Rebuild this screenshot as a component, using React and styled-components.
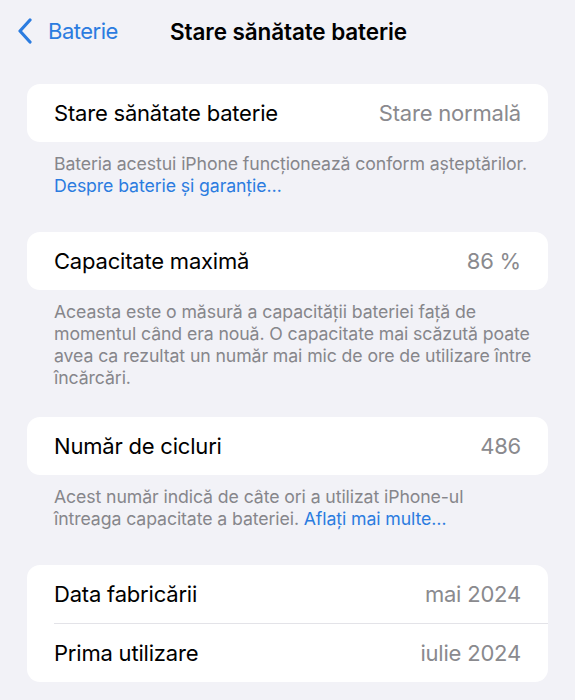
import React from 'react';
import styled, { createGlobalStyle } from 'styled-components';

const GlobalStyle = createGlobalStyle`
  html, body {
    margin: 0;
    padding: 0;
    background: #f2f2f7;
  }
  body {
    font-family: Inter, "Noto Sans", "Liberation Sans", sans-serif;
    -webkit-font-smoothing: antialiased;
  }
`;

const Screen = styled.div`
  width: 575px;
  height: 700px;
  overflow: hidden;
  background: #f2f2f7;
`;

const NavBar = styled.div`
  position: relative;
  height: 62px;
  display: flex;
  align-items: center;
  justify-content: center;
`;

const BackButton = styled.div`
  position: absolute;
  left: 17px;
  top: 0;
  bottom: 0;
  display: flex;
  align-items: center;
  gap: 15px;
  color: #2b7ce0;
  font-size: 22px;
  letter-spacing: -0.5px;
`;

const Title = styled.div`
  font-size: 22.5px;
  font-weight: 600;
  color: #000;
  letter-spacing: -0.1px;
  padding-left: 2px;
`;

const Content = styled.div`
  padding: 22px 27px 0;
  display: flex;
  flex-direction: column;
`;

const Section = styled.section`
  margin-bottom: ${(p) => p.gap || 35}px;
`;

const Card = styled.div`
  background: #fff;
  border-radius: 13px;
  overflow: hidden;
`;

const Row = styled.div`
  height: 58px;
  display: flex;
  align-items: center;
  justify-content: space-between;
  padding: 0 27px;
  font-size: 22px;
  letter-spacing: -0.2px;

  & + & {
    border-top: 1px solid #e3e3e8;
    margin-left: 27px;
    padding-left: 0;
  }
`;

const Label = styled.span`
  color: #000;
`;

const Value = styled.span`
  color: #8a8a8e;
`;

const Footer = styled.p`
  margin: 0;
  padding: 11px 8px 0 27px;
  font-size: 17.7px;
  line-height: 22px;
  color: #86868b;
  letter-spacing: -0.1px;
`;

const Link = styled.span`
  color: #2b7ce0;
`;

const Chevron = () => (
  <svg width="16" height="26" viewBox="0 0 16 26" fill="none">
    <path
      d="M13 2 L3 13 L13 24"
      stroke="#2b7ce0"
      strokeWidth="3.2"
      strokeLinecap="round"
      strokeLinejoin="round"
    />
  </svg>
);

const App = () => {
  return (
    <>
      <GlobalStyle />
      <Screen>
        <NavBar>
          <BackButton>
            <Chevron />
            Baterie
          </BackButton>
          <Title>Stare sănătate baterie</Title>
        </NavBar>
        <Content>
          <Section>
            <Card>
              <Row>
                <Label>Stare sănătate baterie</Label>
                <Value>Stare normală</Value>
              </Row>
            </Card>
            <Footer>
              Bateria acestui iPhone funcționează conform așteptărilor.
              <br />
              <Link>Despre baterie și garanție…</Link>
            </Footer>
          </Section>
          <Section gap={28}>
            <Card>
              <Row>
                <Label>Capacitate maximă</Label>
                <Value>86 %</Value>
              </Row>
            </Card>
            <Footer>
              Aceasta este o măsură a capacității bateriei față de
              <br />
              momentul când era nouă. O capacitate mai scăzută poate avea ca
              rezultat un număr mai mic de ore de utilizare între încărcări.
            </Footer>
          </Section>
          <Section>
            <Card>
              <Row>
                <Label>Număr de cicluri</Label>
                <Value>486</Value>
              </Row>
            </Card>
            <Footer>
              Acest număr indică de câte ori a utilizat iPhone-ul
              <br />
              întreaga capacitate a bateriei. <Link>Aflați mai multe…</Link>
            </Footer>
          </Section>
          <Section>
            <Card>
              <Row>
                <Label>Data fabricării</Label>
                <Value>mai 2024</Value>
              </Row>
              <Row>
                <Label>Prima utilizare</Label>
                <Value>iulie 2024</Value>
              </Row>
            </Card>
          </Section>
        </Content>
      </Screen>
    </>
  );
};

export default App;
